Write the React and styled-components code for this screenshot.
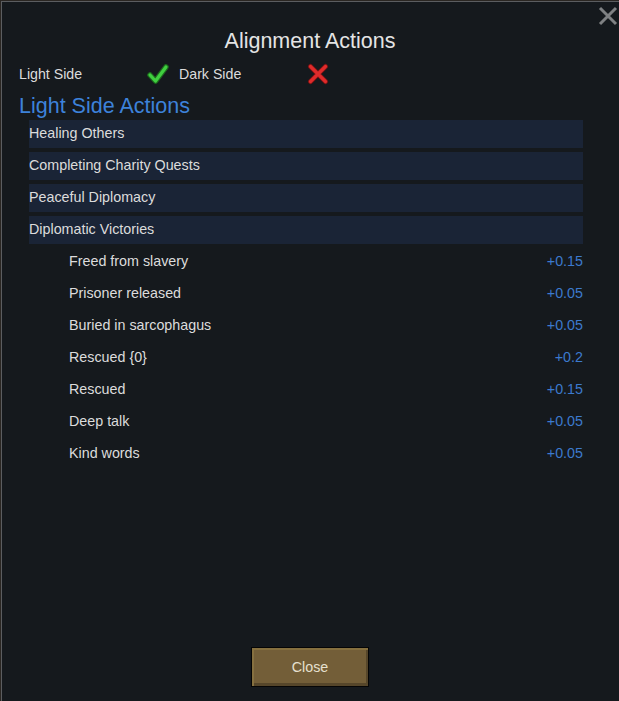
import styled, { createGlobalStyle } from 'styled-components';

const categories = [
    'Healing Others',
    'Completing Charity Quests',
    'Peaceful Diplomacy',
    'Diplomatic Victories',
];

const actions = [
    { label: 'Freed from slavery', value: '+0.15' },
    { label: 'Prisoner released', value: '+0.05' },
    { label: 'Buried in sarcophagus', value: '+0.05' },
    { label: 'Rescued {0}', value: '+0.2' },
    { label: 'Rescued', value: '+0.15' },
    { label: 'Deep talk', value: '+0.05' },
    { label: 'Kind words', value: '+0.05' },
];

const CheckIcon = () => (
    <svg width="22" height="22" viewBox="0 0 22 22">
        <path d="M3 12 L8.5 18 L19 4" fill="none" stroke="#1d6b1d" strokeWidth="5.5" strokeLinecap="round" strokeLinejoin="round" />
        <path d="M3 12 L8.5 18 L19 4" fill="none" stroke="#40cf40" strokeWidth="3.2" strokeLinecap="round" strokeLinejoin="round" />
    </svg>
);

const CrossIcon = () => (
    <svg width="22" height="22" viewBox="0 0 22 22">
        <path d="M3.5 3.5 L18.5 18.5 M18.5 3.5 L3.5 18.5" fill="none" stroke="#7a1414" strokeWidth="5" strokeLinecap="round" />
        <path d="M3.5 3.5 L18.5 18.5 M18.5 3.5 L3.5 18.5" fill="none" stroke="#e02b2b" strokeWidth="3.2" strokeLinecap="round" />
    </svg>
);

const App = () => {
    return (
        <Page>
            <GlobalStyle />
            <Window>
                <CloseX aria-label="close">
                    <svg width="20" height="20" viewBox="0 0 20 20">
                        <path d="M2 2 L18 18 M18 2 L2 18" stroke="#7f8183" strokeWidth="3" />
                    </svg>
                </CloseX>

                <Title>Alignment Actions</Title>

                <StatusRow>
                    <StatusGroup>
                        <StatusLabel>Light Side</StatusLabel>
                        <CheckIcon />
                    </StatusGroup>
                    <StatusGroup>
                        <StatusLabel>Dark Side</StatusLabel>
                        <CrossIcon />
                    </StatusGroup>
                </StatusRow>

                <SectionTitle>Light Side Actions</SectionTitle>

                <List>
                    {categories.map(c => (
                        <CategoryRow key={c}>{c}</CategoryRow>
                    ))}
                    {actions.map(a => (
                        <ActionRow key={a.label}>
                            <span>{a.label}</span>
                            <Value>{a.value}</Value>
                        </ActionRow>
                    ))}
                </List>

                <Footer>
                    <CloseButton>Close</CloseButton>
                </Footer>
            </Window>
        </Page>
    );
};

export default App;


/* ============ styles ============ */
const GlobalStyle = createGlobalStyle`
    html, body {
        margin: 0;
        padding: 0;
        background: #2a2622;
    }
    * {
        box-sizing: border-box;
    }
`;

const Page = styled.div`
    height: 100vh;
    padding: 1px 0 0 1px;
    font-family: "Liberation Sans", Arial, sans-serif;
    color: #dcdcdc;
`;

const Window = styled.div`
    position: relative;
    height: 100%;
    background: #15191d;
    border-top: 1px solid #5b5d60;
    border-left: 1px solid #5b5d60;
    padding: 26px 18px 14px 17px;
    display: flex;
    flex-direction: column;
`;

const CloseX = styled.div`
    position: absolute;
    top: 4px;
    right: 1px;
    width: 20px;
    height: 20px;
    cursor: pointer;
`;

const Title = styled.h1`
    margin: 0;
    font-size: 21.5px;
    line-height: 26px;
    font-weight: 400;
    text-align: center;
    color: #e4e4e4;
`;

const StatusRow = styled.div`
    display: flex;
    align-items: center;
    margin-top: 10px;
    height: 20px;
`;

const StatusGroup = styled.div`
    display: flex;
    align-items: center;
    width: 160px;
`;

const StatusLabel = styled.span`
    width: 128px;
    font-size: 14.2px;
    line-height: 20px;
`;

const SectionTitle = styled.h2`
    margin: 9px 0 0;
    font-size: 21.5px;
    line-height: 26px;
    font-weight: 400;
    color: #3d82da;
`;

const List = styled.div`
    display: flex;
    flex-direction: column;
    gap: 4px;
    margin: 1px 18px 0 10px;
`;

const CategoryRow = styled.div`
    height: 28px;
    padding-bottom: 2px;
    display: flex;
    align-items: center;
    background: #1a2436;
    font-size: 14.3px;
`;

const ActionRow = styled.div`
    height: 28px;
    padding: 0 0 2px 40px;
    display: flex;
    align-items: center;
    justify-content: space-between;
    font-size: 14.3px;
`;

const Value = styled.span`
    color: #3c7acd;
`;

const Footer = styled.div`
    margin-top: auto;
    display: flex;
    justify-content: center;
`;

const CloseButton = styled.button`
    width: 118px;
    height: 40px;
    background: #735e38;
    border: 1px solid #050505;
    box-shadow:
        inset 2px 2px 0 #86703f,
        inset -2px -3px 0 #56462a;
    color: #e6e0cf;
    font-family: "Liberation Sans", Arial, sans-serif;
    font-size: 14.3px;
    cursor: pointer;
    padding: 0;
`;
